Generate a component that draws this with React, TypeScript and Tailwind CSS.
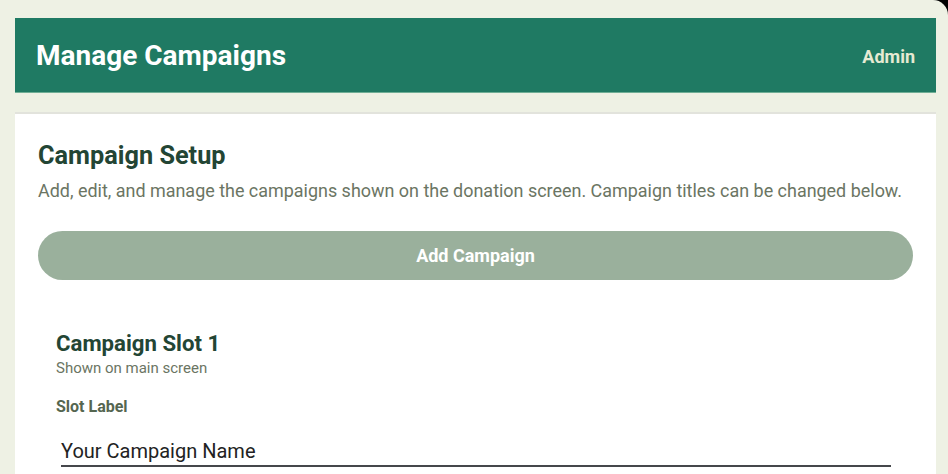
export default function App() {
  return (
    <div className="h-[474px] w-[948px] overflow-hidden bg-[#000000] font-['Roboto',sans-serif]">
      <div className="flex h-full w-full flex-col overflow-hidden rounded-tr-[15px] bg-[#eef1e4] pt-[18px]">
        <header className="mx-[15px] flex h-[75px] w-[921px] shrink-0 items-center justify-between border-b border-[#6fae95] bg-[#1f7a63] pr-[21px] pl-[21px]">
          <h1 className="pt-[2px] text-[28px] leading-[34px] font-bold text-white">Manage Campaigns</h1>
          <span className="pt-[2px] text-[18px] font-bold text-[#e6ead3]">Admin</span>
        </header>
        <main className="mx-[15px] mt-[19px] w-[921px] grow border-t-2 border-[#e2e3dc] bg-white px-[23px] pt-[27px]">
          <h2 className="text-[25.3px] leading-[30px] font-bold text-[#234534]">Campaign Setup</h2>
          <p className="mt-[7px] text-[17.94px] leading-[26px] whitespace-nowrap text-[#6b7563]">
            Add, edit, and manage the campaigns shown on the donation screen. Campaign titles can be changed below.
          </p>
          <button className="mt-[27px] flex h-[49px] w-full items-center justify-center rounded-full bg-[#9ab09c] text-[18px] font-bold text-white">
            Add Campaign
          </button>
          <section className="px-[18px] pt-[49px]">
            <h3 className="text-[22.2px] leading-[28px] font-bold text-[#234534]">Campaign Slot 1</h3>
            <p className="mt-[1px] text-[15px] leading-[20px] text-[#6b7563]">Shown on main screen</p>
            <label className="mt-[19px] block text-[16px] leading-[20px] font-bold text-[#556650]">Slot Label</label>
            <div className="mt-[20px] mr-[4px] ml-[5px] border-b-2 border-[#45474b]">
              <span className="block text-[20px] leading-[28px] text-[#222222]">Your Campaign Name</span>
            </div>
          </section>
        </main>
      </div>
    </div>
  );
}
